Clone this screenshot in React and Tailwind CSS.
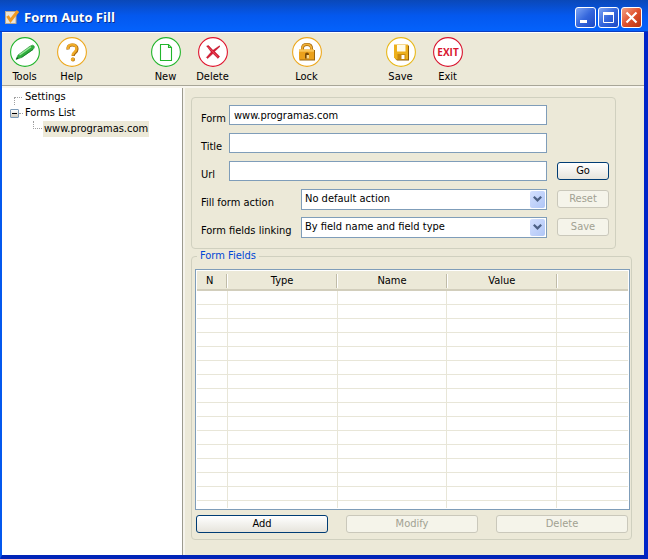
import React, { useState } from "react";

const COLUMNS = ["Type", "Name", "Value"];
const EMPTY_ROWS = Array.from({ length: 15 }, (_, i) => i);

const PencilIcon = () => (
  <>
    <path d="M6 22.4 L8 18 L20 9.2 Q23 7.2 24.2 9 Q25 10.8 23 12.6 L11.5 20.6 Z" fill="#2fae3c" stroke="#2a9438" strokeWidth="0.6" />
    <path d="M9.5 18 L21 9.8" stroke="#9be59c" strokeWidth="1.4" />
    <path d="M11.5 20.4 L23 12.4" stroke="#147a28" strokeWidth="0.9" />
    <path d="M6 22.4 L7 20.2 L8.6 21.6 Z" fill="#0c4d18" />
  </>
);

const HelpIcon = () => (
  <>
    <path d="M11 12.5 Q10.6 8 15.2 8 Q20 8 20 12 Q20 14.4 17.8 15.8 Q16.2 16.8 16.2 19" fill="none" stroke="#a86a10" strokeWidth="3.2" />
    <path d="M11 12 Q10.8 7.6 15 7.6 Q19.4 7.6 19.4 11.6 Q19.4 14 17.2 15.4 Q15.6 16.4 15.6 18.6" fill="none" stroke="#f0ac28" strokeWidth="2.4" />
    <circle cx="16" cy="22.6" r="2" fill="#a86a10" />
    <circle cx="15.6" cy="22.2" r="1.7" fill="#f0ac28" />
  </>
);

const PageIcon = () => (
  <path d="M9.5 7.5 H17.5 L20.5 10.5 V23.5 H9.5 Z M17.5 7.5 V10.5 H20.5" fill="#fff" stroke="#22b52c" strokeWidth="1.1" />
);

const CrossIcon = () => (
  <>
    <path d="M8.6 9 L10.6 8.6 L15 13.2 L21.4 8.8 L22 9.4 L16.6 14.6 L21.6 19.4 L20 21.4 L15 16.6 L9.6 21.6 L8.4 20.4 L13.2 15 Z" fill="#d81830" stroke="#a30a20" strokeWidth="0.4" />
    <path d="M10.2 10 L19.8 19.6" stroke="#f05a6a" strokeWidth="0.8" />
  </>
);

const LockIcon = () => (
  <>
    <path d="M10.5 14 V11.5 Q10.5 7.6 15 7.6 Q19.5 7.6 19.5 11.5 V14" fill="none" stroke="#a06408" strokeWidth="3" />
    <path d="M10.3 14 V11.3 Q10.3 7.4 14.8 7.4 Q19.3 7.4 19.3 11.3 V14" fill="none" stroke="#f0b038" strokeWidth="1.8" />
    <rect x="7.5" y="13" width="15.5" height="10.5" fill="#9a640c" />
    <rect x="7" y="12.5" width="15" height="10" fill="#eba11c" />
    <rect x="7" y="12.5" width="15" height="2.2" fill="#fac65a" />
    <path d="M13 21.5 V17.4 A2 2 0 0 1 17 17.4 V21.5 Z" fill="#7a4a04" />
    <path d="M14.6 21.5 V18 H17 V21.5 Z" fill="#f8d890" />
  </>
);

const DiskIcon = () => (
  <>
    <path d="M9 8.5 H23 V23.5 H11 L9 21.5 Z" fill="#8f5c04" />
    <path d="M8 7.5 H22 V22.5 H10 L8 20.5 Z" fill="#edb01c" />
    <rect x="11" y="8" width="8.5" height="6.5" fill="#fffbe8" />
    <rect x="11.5" y="17" width="8" height="5" fill="#c88a10" />
    <rect x="15.5" y="18" width="3" height="4" fill="#fff" />
  </>
);

const TOOLS = [
  { label: "Tools", color: "#22b52c", icon: <PencilIcon /> },
  { label: "Help", color: "#eda81e", icon: <HelpIcon /> },
  null,
  { label: "New", color: "#22b52c", icon: <PageIcon /> },
  { label: "Delete", color: "#e0142e", icon: <CrossIcon /> },
  null,
  { label: "Lock", color: "#eda81e", icon: <LockIcon /> },
  null,
  { label: "Save", color: "#e8b81a", icon: <DiskIcon /> },
  {
    label: "Exit",
    color: "#d8142e",
    icon: (
      <text x="15" y="19" textAnchor="middle" fontSize="10" fontWeight="700" fontFamily="'Open Sans', sans-serif" fill="#d8142e">
        EXIT
      </text>
    ),
  },
];

const ToolButton = ({ label, color, icon }) => (
  <button type="button" className="flex w-[47px] flex-col items-center">
    <svg viewBox="0 0 30 30" className="h-[30px] w-[30px]" aria-hidden="true">
      <circle cx="15" cy="15" r="14.4" fill="#fff" stroke={color} strokeWidth="1.1" />
      {icon}
    </svg>
    <span className="mt-[3px] leading-[14px]">{label}</span>
  </button>
);

const WindowButton = ({ label, danger, children }) => (
  <button
    type="button"
    aria-label={label}
    className={`h-[21px] w-[21px] rounded-[3px] border border-white ${
      danger
        ? "bg-linear-to-br from-[#f0a084] via-[#e0502c] to-[#b83410]"
        : "bg-linear-to-br from-[#7ea4f4] via-[#3466dc] to-[#1c48c4]"
    }`}
  >
    <svg viewBox="0 0 19 19" className="h-[19px] w-[19px]" aria-hidden="true">
      {children}
    </svg>
  </button>
);

const TitleBar = () => (
  <header className="flex h-8 items-center border-b border-[#0a3cc0] bg-linear-to-b from-[#0a48b8] via-[#0458ee] to-[#0462fc] pt-[3px] pr-[6px] pl-[5px]">
    <svg viewBox="0 0 16 16" className="h-4 w-4" aria-hidden="true">
      <rect x="0.5" y="2.5" width="10.5" height="12" fill="#e8e4dc" stroke="#b8a890" />
      <path d="M2.5 7 L5.5 11.5 L13 2" fill="none" stroke="#f09a20" strokeWidth="3" />
    </svg>
    <h1 className="ml-[3px] flex-1 font-['Open_Sans','Noto_Sans',sans-serif] text-[13px] leading-4 font-bold text-white [text-shadow:1px_1px_#0a2f8c]">
      Form Auto Fill
    </h1>
    <div className="flex gap-0.5">
      <WindowButton label="Minimize">
        <rect x="4" y="12" width="7" height="3" fill="#fff" />
      </WindowButton>
      <WindowButton label="Maximize">
        <path d="M4.5 5 H14.5 V14.5 H4.5 Z" fill="none" stroke="#fff" />
        <rect x="4" y="4" width="11" height="3" fill="#fff" />
      </WindowButton>
      <WindowButton label="Close" danger>
        <path d="M4.5 4.5 L14.5 14.5 M14.5 4.5 L4.5 14.5" stroke="#fff" strokeWidth="2.2" />
      </WindowButton>
    </div>
  </header>
);

const FormsTree = () => (
  <nav className="w-[181px] shrink-0 border-r border-[#9c9a8e] bg-white pt-px leading-4">
    <ul>
      <li className="flex h-4 items-center">
        <span className="mt-2 ml-3 h-2 w-2 border-t border-l border-dotted border-[#a0a0a0]" />
        <a href="#settings" className="ml-[3px]">Settings</a>
      </li>
      <li>
        <div className="flex h-4 items-center">
          <button
            type="button"
            aria-label="Collapse Forms List"
            className="ml-2 flex h-[9px] w-[9px] items-center justify-center rounded-[1px] border border-[#7b9ab8] bg-linear-to-b from-white to-[#d0ccc0]"
          >
            <span className="h-px w-[5px] bg-black" />
          </button>
          <span className="w-1 border-t border-dotted border-[#a0a0a0]" />
          <a href="#forms" className="ml-0.5">Forms List</a>
        </div>
        <ul>
          <li className="flex h-4 items-center">
            <span className="mb-2 ml-[31px] h-2 w-[9px] border-b border-l border-dotted border-[#a0a0a0]" />
            <a href="#form" className="ml-px bg-[#ece9d8] px-px">www.programas.com</a>
          </li>
        </ul>
      </li>
    </ul>
  </nav>
);

const XpButton = ({ className = "", ...props }) => (
  <button
    type="button"
    className={`h-[18px] rounded-[3px] border border-[#003c74] bg-linear-to-b from-white to-[#e6e4dc] leading-4 disabled:border-[#cac8bb] disabled:bg-none disabled:bg-[#f5f4ea] disabled:text-[#a1a192] ${className}`}
    {...props}
  />
);

const TextRow = ({ id, label, value, onChange, children }) => (
  <div className="flex h-7 items-center">
    <label htmlFor={id} className="w-7 pt-[7px] leading-[14px]">{label}</label>
    <input
      id={id}
      type="text"
      value={value}
      onChange={onChange}
      className="h-5 min-w-0 flex-1 border border-[#7f9db9] bg-white px-1 outline-none"
    />
    <div className="ml-[10px] w-[52px]">{children}</div>
  </div>
);

const SelectRow = ({ id, label, options, children }) => (
  <div className="flex h-7 items-center">
    <label htmlFor={id} className="w-[100px] pt-[7px] leading-[14px]">{label}</label>
    <div className="relative flex h-[21px] min-w-0 flex-1">
      <select id={id} className="w-full appearance-none border border-[#7f9db9] bg-white px-[3px] outline-none">
        {options.map((option) => (
          <option key={option}>{option}</option>
        ))}
      </select>
      <span className="pointer-events-none absolute inset-y-0.5 right-0.5 flex w-[15px] items-center justify-center rounded-[2px] bg-linear-to-br from-[#d4e0fe] to-[#b0c6f6]">
        <svg viewBox="0 0 9 6" className="h-[6px] w-[9px]" aria-hidden="true">
          <path d="M0.8 0.8 L4.5 4.4 L8.2 0.8" fill="none" stroke="#4d6185" strokeWidth="2.2" />
        </svg>
      </span>
    </div>
    <div className="ml-[10px] w-[52px]">{children}</div>
  </div>
);

const FieldsTable = () => (
  <div className="flex-1 border border-[#7f9db9] bg-white p-px">
    <table className="h-full w-full table-fixed border-collapse">
      <colgroup>
        <col className="w-[7%]" />
        <col className="w-[25.5%]" />
        <col className="w-[25.5%]" />
        <col className="w-[25.5%]" />
        <col />
      </colgroup>
      <thead>
        <tr className="h-[19px] border-b-2 border-[#d2cebc] bg-[#ece9d8]">
          <th className="p-0 font-normal">
            <div className="mt-px h-3.5 border-r border-[#c0bca8] pr-1 leading-[14px]">N</div>
          </th>
          {COLUMNS.map((column) => (
            <th key={column} className="p-0 font-normal">
              <div className="mt-px h-3.5 border-r border-l border-r-[#c0bca8] border-l-white leading-[14px]">{column}</div>
            </th>
          ))}
          <th className="p-0">
            <div className="mt-px h-3.5 border-l border-white" />
          </th>
        </tr>
      </thead>
      <tbody>
        {EMPTY_ROWS.map((row) => (
          <tr key={row} className="h-3.5 border-b border-[#e8e6d8]">
            <td className="border-r border-[#e8e6d8] p-0" />
            <td className="border-r border-[#e8e6d8] p-0" />
            <td className="border-r border-[#e8e6d8] p-0" />
            <td className="border-r border-[#e8e6d8] p-0" />
            <td className="p-0" />
          </tr>
        ))}
        <tr>
          <td className="h-2 border-r border-[#e8e6d8] p-0" />
          <td className="border-r border-[#e8e6d8] p-0" />
          <td className="border-r border-[#e8e6d8] p-0" />
          <td className="border-r border-[#e8e6d8] p-0" />
          <td className="p-0" />
        </tr>
      </tbody>
    </table>
  </div>
);

export default function App() {
  const [form, setForm] = useState({ name: "www.programas.com", title: "", url: "" });

  const update = (key) => (e) => setForm({ ...form, [key]: e.target.value });

  return (
    <div className="flex min-h-screen flex-col bg-[#ece9d8] font-['DejaVu_Sans_Condensed','DejaVu_Sans',sans-serif] text-[11px] text-black">
      <TitleBar />
      <div className="flex flex-1 flex-col border-r-4 border-b-4 border-l-2 border-r-[#0024c8] border-b-[#0024b8] border-l-[#0458ee]">
        <div className="border-t border-b border-t-white border-b-[#a8a698] pt-1 pb-px">
          <div className="-ml-px flex">
            {TOOLS.map((tool, i) =>
              tool ? <ToolButton key={tool.label} {...tool} /> : <div key={i} className="w-[47px]" />
            )}
          </div>
        </div>
        <div className="flex flex-1 border-t-2 border-[#f8f6ee]">
          <FormsTree />
          <main className="flex min-w-0 flex-1 flex-col border-l-2 border-[#f6f4ec] pt-[9px] pr-3 pb-[15px] pl-[6px]">
            <section className="mr-4 rounded-[4px] border border-[#d0d0bf] pt-[3px] pr-[6px] pb-[7px] pl-[9px]">
              <TextRow id="form" label="Form" value={form.name} onChange={update("name")} />
              <TextRow id="title" label="Title" value={form.title} onChange={update("title")} />
              <TextRow id="url" label="Url" value={form.url} onChange={update("url")}>
                <XpButton className="w-full">Go</XpButton>
              </TextRow>
              <SelectRow id="action" label="Fill form action" options={["No default action"]}>
                <XpButton className="w-full" disabled>Reset</XpButton>
              </SelectRow>
              <SelectRow id="linking" label="Form fields linking" options={["By field name and field type"]}>
                <XpButton className="w-full" disabled>Save</XpButton>
              </SelectRow>
            </section>
            <fieldset className="flex flex-1 flex-col rounded-[4px] border border-[#d0d0bf] pt-[6px] pr-px pb-[6px] pl-[3px]">
              <legend className="ml-0.5 px-[3px] leading-[14px] text-[#0046d5]">Form Fields</legend>
              <FieldsTable />
              <div className="mt-[5px] flex gap-[18px] pr-0.5 pl-px">
                <XpButton className="flex-1">Add</XpButton>
                <XpButton className="flex-1" disabled>Modify</XpButton>
                <XpButton className="flex-1" disabled>Delete</XpButton>
              </div>
            </fieldset>
          </main>
        </div>
      </div>
    </div>
  );
}
